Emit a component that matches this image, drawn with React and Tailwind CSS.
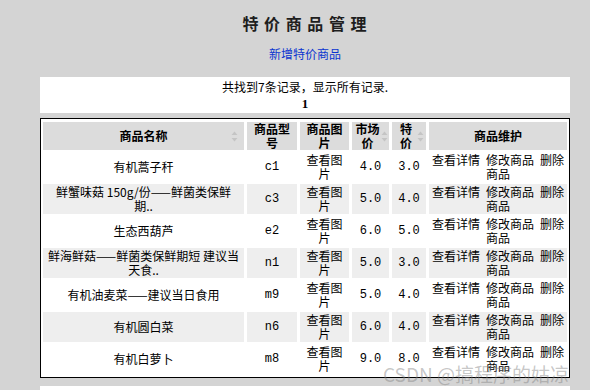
import React from "react";

const rows = [
  { name: ["有机蒿子秆"], code: "c1", mkt: "4.0", sp: "3.0" },
  { name: ["鲜蟹味菇 150g/份——鲜菌类保鲜", "期.."], code: "c3", mkt: "5.0", sp: "4.0" },
  { name: ["生态西葫芦"], code: "e2", mkt: "6.0", sp: "5.0" },
  { name: ["鲜海鲜菇——鲜菌类保鲜期短 建议当", "天食.."], code: "n1", mkt: "5.0", sp: "3.0" },
  { name: ["有机油麦菜——建议当日食用"], code: "m9", mkt: "5.0", sp: "4.0" },
  { name: ["有机圆白菜"], code: "n6", mkt: "6.0", sp: "4.0" },
  { name: ["有机白萝卜"], code: "m8", mkt: "9.0", sp: "8.0" },
];

function SortIcon() {
  return (
    <svg width="7" height="11" viewBox="0 0 7 11">
      <path d="M3.5 0.5 L6.5 4 L0.5 4 Z" fill="#c4c4c4" />
      <path d="M0.5 7 L6.5 7 L3.5 10.5 Z" fill="#c4c4c4" />
    </svg>
  );
}

function Lines({ lines }) {
  return (
    <div className="flex flex-col items-center">
      {lines.map((l, i) => (
        <span key={i} className="whitespace-nowrap h-[14px]">
          {l}
        </span>
      ))}
    </div>
  );
}

export default function App() {
  const th =
    "relative h-[28px] bg-[#dcdcdc] flex items-center justify-center text-center font-bold text-[12px] leading-[14px] text-black";
  return (
    <div className="relative w-[590px] h-[390px] overflow-hidden bg-[#d4d4d4] font-['Noto_Sans_CJK_SC','Noto_Sans',sans-serif] text-black">
      <div className="ml-[40px] w-[530px] flex flex-col items-center">
        <div className="mt-[13px] h-[20px] leading-[20px] text-[16px] font-bold tracking-[1px] text-[#1e1e1e]">
          特 价 商 品 管 理
        </div>
        <div className="mt-[14px] h-[14px] leading-[14px] text-[12px] text-[#0a35d0]">新增特价商品</div>
        <div className="mt-[16px] w-full h-[36px] bg-white flex flex-col items-center pt-[2px]">
          <div className="h-[16px] leading-[16px] text-[12px]">共找到7条记录，显示所有记录.</div>
          <div className="h-[16px] leading-[17px] text-[13px] font-bold font-['Liberation_Serif',serif]">1</div>
        </div>
        <div className="mt-[5px] w-full border border-black bg-white px-[2px] py-[3px]">
          <div className="grid grid-cols-[201px_50px_49px_37px_34px_1fr] gap-x-[3px] gap-y-[2px]">
            <div className={th}>
              <span>商品名称</span>
              <span className="absolute right-[6px] top-[9px] flex">
                <SortIcon />
              </span>
            </div>
            <div className={th}>
              <Lines lines={["商品型", "号"]} />
            </div>
            <div className={th}>
              <Lines lines={["商品图", "片"]} />
            </div>
            <div className={th + " pr-[6px]"}>
              <Lines lines={["市场", "价"]} />
              <span className="absolute right-[1px] top-[9px] flex">
                <SortIcon />
              </span>
            </div>
            <div className={th + " pr-[6px]"}>
              <Lines lines={["特", "价"]} />
              <span className="absolute right-[2px] top-[9px] flex">
                <SortIcon />
              </span>
            </div>
            <div className={th}>
              <span>商品维护</span>
            </div>

            {rows.map((r, i) => {
              const bg = i % 2 === 1 ? "bg-[#eeeeee]" : "bg-white";
              const td = `h-[30px] ${bg} flex items-center justify-center text-center text-[12px] leading-[14px]`;
              return (
                <React.Fragment key={i}>
                  <div className={td}>
                    <Lines lines={r.name} />
                  </div>
                  <div className={td + " font-['Liberation_Mono',monospace] text-[11px]"}>{r.code}</div>
                  <div className={td}>
                    <Lines lines={["查看图", "片"]} />
                  </div>
                  <div className={td + " font-['Liberation_Mono',monospace] text-[11px]"}>{r.mkt}</div>
                  <div className={td + " font-['Liberation_Mono',monospace] text-[11px]"}>{r.sp}</div>
                  <div className={td}>
                    <div className="flex flex-col items-center">
                      <div className="flex gap-[6px] whitespace-nowrap h-[14px]">
                        <span>查看详情</span>
                        <span>修改商品</span>
                        <span>删除</span>
                      </div>
                      <span className="h-[14px]">商品</span>
                    </div>
                  </div>
                </React.Fragment>
              );
            })}
          </div>
        </div>
        <div className="mt-[8px] w-full h-[36px] bg-white"></div>
      </div>
      <div className="absolute left-[383px] top-[361px] h-[26px] leading-[26px] text-[19px] text-[rgba(130,130,130,0.45)] whitespace-nowrap">
        CSDN @搞程序的姑凉
      </div>
    </div>
  );
}
